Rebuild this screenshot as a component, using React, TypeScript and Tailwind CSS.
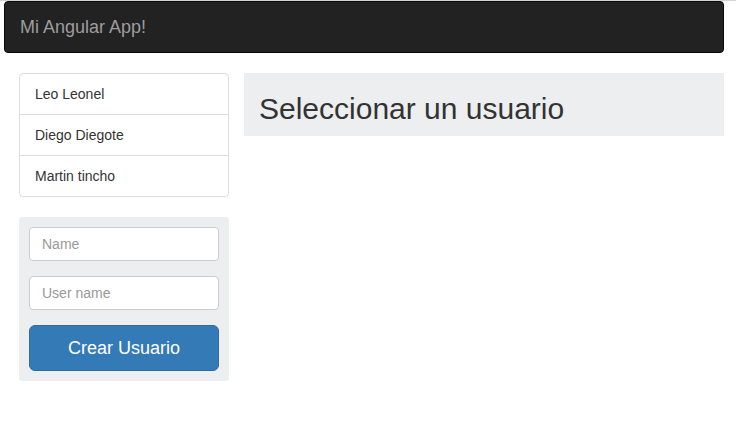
import React from "react";

export default function App() {
  const users = ["Leo Leonel", "Diego Diegote", "Martin tincho"];
  return (
    <div
      className="w-[736px] h-[428px] bg-white border-t border-[#d4d4d4] text-[#333] text-[14px]"
      style={{ fontFamily: '"Liberation Sans", Arial, Helvetica, sans-serif' }}
    >
      <div className="ml-[4px] w-[720px] h-[52px] bg-[#222] border border-[#080808] rounded-[4px] flex items-center pl-[15px]">
        <span className="text-[18px] text-[#9d9d9d] leading-[20px]">Mi Angular App!</span>
      </div>
      <div className="flex mt-[20px] ml-[19px] gap-[15px]">
        <div className="w-[210px] flex flex-col">
          <div className="border border-[#ddd] rounded-[4px] bg-white">
            {users.map((u, i) => (
              <div
                key={u}
                className={`px-[15px] flex items-center ${i > 0 ? "h-[41px] border-t border-[#ddd]" : "h-[40px]"}`}
              >
                {u}
              </div>
            ))}
          </div>
          <div className="mt-[20px] bg-[#eceeef] rounded-[3px] p-[10px] flex flex-col">
            <input
              className="h-[34px] w-full border border-[#ccc] rounded-[4px] px-[12px] bg-white text-[14px] placeholder:text-[#999] outline-none"
              placeholder="Name"
            />
            <input
              className="mt-[15px] h-[34px] w-full border border-[#ccc] rounded-[4px] px-[12px] bg-white text-[14px] placeholder:text-[#999] outline-none"
              placeholder="User name"
            />
            <button className="mt-[15px] h-[46px] w-full rounded-[6px] bg-[#337ab7] border border-[#2e6da4] text-white text-[18px]">
              Crear Usuario
            </button>
          </div>
        </div>
        <div className="w-[480px] h-[63px] bg-[#eceeef] flex items-center px-[15px] pt-[8px]">
          <h2 className="text-[30px] leading-[33px] text-[#333] font-normal">Seleccionar un usuario</h2>
        </div>
      </div>
    </div>
  );
}
